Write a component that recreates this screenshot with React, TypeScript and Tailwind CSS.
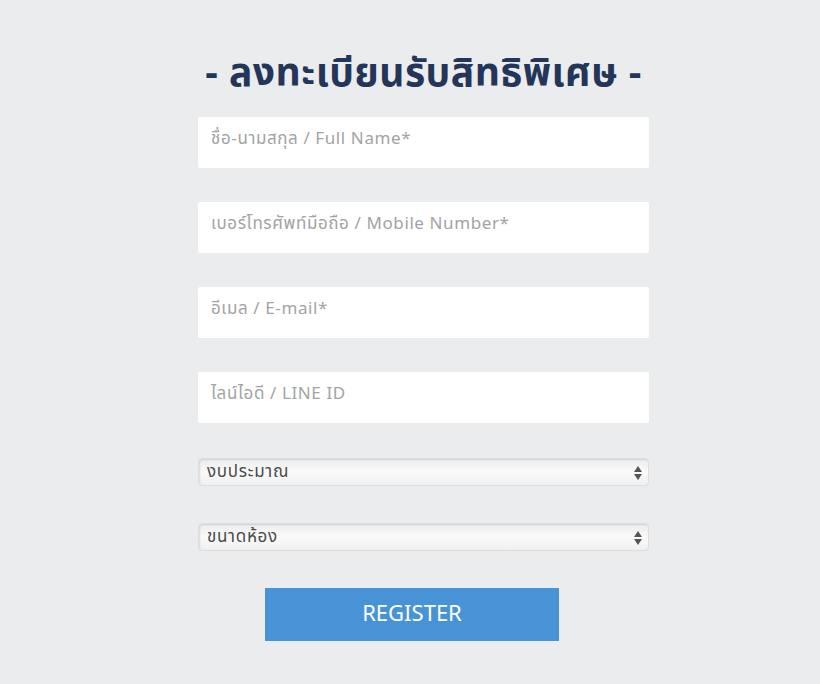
import React from "react";

const font = { fontFamily: '"Noto Sans Thai", "Noto Sans", "Liberation Sans", sans-serif' };

function Field({ label }: { label: string }) {
  return (
    <div className="h-[51px] w-[451px] bg-white rounded-[2px] px-[13px] pt-[9px] text-[17px] tracking-[0.6px] text-[#a3a3a3] leading-[26px]">
      {label}
    </div>
  );
}

function SelectBox({ label }: { label: string }) {
  return (
    <div className="relative h-[28px] w-[451px] rounded-[4px] border border-[#dedede] bg-gradient-to-b from-[#ececec] via-[#fafafa] to-[#f0f0f0] shadow-[inset_1px_1px_2px_rgba(0,0,0,0.12)] flex items-center pl-[8px] text-[17px] tracking-[0.7px] text-[#4a4a4a] leading-none">
      {label}
      <svg className="absolute right-[6px] top-[7px]" width="8" height="14" viewBox="0 0 8 14">
        <path d="M4 0 L8 6 L0 6 Z" fill="#555" />
        <path d="M0 8 L8 8 L4 14 Z" fill="#555" />
      </svg>
    </div>
  );
}

export default function App() {
  return (
    <div className="w-[820px] h-[684px] bg-[#ebecee] flex flex-col items-start pl-[198px]" style={font}>
      <h1 className="mt-[50px] h-[50px] w-[451px] text-center text-[39px] font-bold text-[#233559] leading-[50px] tracking-[0.5px]">
        - ลงทะเบียนรับสิทธิพิเศษ -
      </h1>
      <div className="mt-[17px] flex flex-col gap-[34px]">
        <Field label="ชื่อ-นามสกุล / Full Name*" />
        <Field label="เบอร์โทรศัพท์มือถือ / Mobile Number*" />
        <Field label="อีเมล / E-mail*" />
        <Field label="ไลน์ไอดี / LINE ID" />
      </div>
      <div className="mt-[35px] flex flex-col gap-[37px]">
        <SelectBox label="งบประมาณ" />
        <SelectBox label="ขนาดห้อง" />
      </div>
      <button className="ml-[67px] mt-[37px] h-[53px] w-[294px] bg-[#4893d6] text-white text-[22px] leading-none">
        REGISTER
      </button>
    </div>
  );
}
